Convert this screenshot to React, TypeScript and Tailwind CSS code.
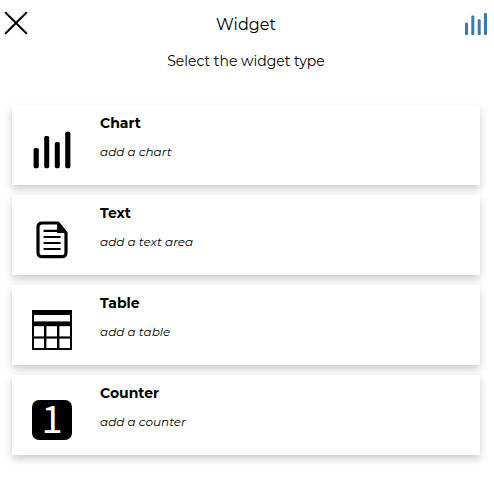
import type { ReactNode } from "react";

function BarsIcon({ className }: { className: string }) {
  return (
    <svg viewBox="0 0 40 40" className={className} fill="currentColor" aria-hidden="true">
      <rect x="1.6" y="18" width="5.2" height="20.2" rx="1.6" />
      <rect x="12.2" y="6" width="5" height="32.2" rx="1.6" />
      <rect x="22.8" y="12" width="5" height="26.2" rx="1.6" />
      <rect x="33.2" y="1.8" width="5.2" height="36.4" rx="1.6" />
    </svg>
  );
}

function TextIcon() {
  return (
    <svg viewBox="0 0 40 40" className="size-10" fill="none" stroke="black" aria-hidden="true">
      <path
        d="M11 3H26L34 13V32.5Q34 36.7 29.8 36.7H10.2Q6 36.7 6 32.5V7.2Q6 3 10.2 3Z"
        strokeWidth="3.2"
        strokeLinejoin="round"
      />
      <path d="M25 2L35.5 13H25Z" fill="black" stroke="none" />
      <path d="M11.6 10.9H25M11.6 17H28.6M11.6 23H28.6M11.6 29H28.6" strokeWidth="2.1" />
    </svg>
  );
}

function TableIcon() {
  return (
    <svg viewBox="0 0 40 40" className="size-10" aria-hidden="true">
      <rect width="40" height="40" fill="black" />
      <g fill="white">
        <rect x="2" y="5" width="36" height="6.4" />
        <rect x="2" y="16.2" width="10" height="10.2" />
        <rect x="14.4" y="16.2" width="10.6" height="10.2" />
        <rect x="27.4" y="16.2" width="10.6" height="10.2" />
        <rect x="2" y="28.6" width="10" height="9.4" />
        <rect x="14.4" y="28.6" width="10.6" height="9.4" />
        <rect x="27.4" y="28.6" width="10.6" height="9.4" />
      </g>
    </svg>
  );
}

function CounterIcon() {
  return (
    <span
      aria-hidden="true"
      className="flex size-10 items-center justify-center rounded-[7px] bg-black pb-1.5 font-['Noto_Sans_CJK_JP',sans-serif] text-[38px] leading-8 text-white"
    >
      1
    </span>
  );
}

const widgets: { title: string; description: string; icon: ReactNode }[] = [
  { title: "Chart", description: "add a chart", icon: <BarsIcon className="size-10" /> },
  { title: "Text", description: "add a text area", icon: <TextIcon /> },
  { title: "Table", description: "add a table", icon: <TableIcon /> },
  { title: "Counter", description: "add a counter", icon: <CounterIcon /> },
];

export default function App() {
  return (
    <main className="min-h-screen bg-white font-[Montserrat,Inter,sans-serif] text-black">
      <header className="flex h-12 items-center justify-between pl-1 pr-1.5">
        <button type="button" aria-label="Close" className="size-6">
          <svg viewBox="0 0 24 24" className="size-6" fill="none" stroke="currentColor" strokeWidth="2" strokeLinecap="round" aria-hidden="true">
            <path d="M1.7 0.7L22.3 21.3M22.3 0.7L1.7 21.3" />
          </svg>
        </button>
        <h1 className="pt-px text-base leading-6">Widget</h1>
        <BarsIcon className="size-6 text-[#3b7aac]" />
      </header>
      <p className="mb-8 pr-0.5 pt-px text-center text-sm leading-6">Select the widget type</p>
      <ul className="flex flex-col gap-2.5 pl-3 pr-3.5">
        {widgets.map(({ title, description, icon }) => (
          <li key={title}>
            <button
              type="button"
              className="flex h-20 w-full items-start bg-white pl-5 text-left shadow-[0_4px_8px_0_rgba(0,0,0,0.2)]"
            >
              <span className="mt-6 pt-px">{icon}</span>
              <span className="ml-7 flex flex-col gap-[9px] pt-2">
                <span className="text-sm font-bold leading-5">{title}</span>
                <span className="text-xs italic leading-5">{description}</span>
              </span>
            </button>
          </li>
        ))}
      </ul>
    </main>
  );
}
